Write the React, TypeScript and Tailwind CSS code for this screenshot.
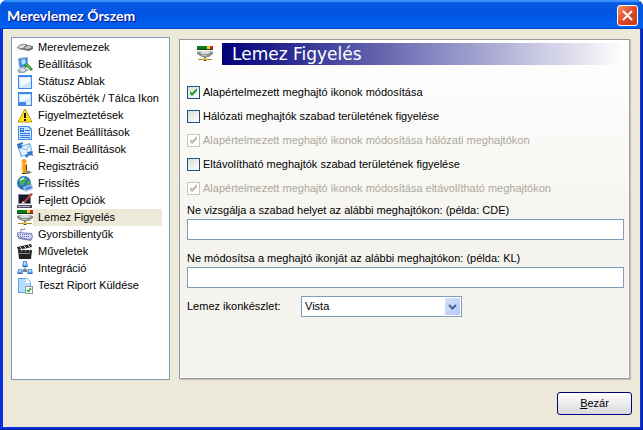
import type { ReactNode } from "react";

type MenuItem = { label: string; icon: ReactNode };

const LevelDrive = () => (
	<>
		<path d="M0 0h11v4H0z" fill="#0a7d1c" />
		<path d="M10 0h3v4h-3z" fill="#f2d21c" />
		<path d="M13 0h3v4h-3z" fill="#d8241c" />
		<path d="M0 3h16v1H0z" fill="#1c3a14" />
		<path d="M0 6l3-1h10l3 1v2l-4 3H5L0 8z" fill="#8d8d8b" />
		<path d="M2 6l3-1h6l3 1-3 2H5z" fill="#d9d9d7" />
		<path d="M5 9h5v1H5z" fill="#c4c4c2" />
		<path d="M7 11h2v2H7z" fill="#6d6d6b" />
		<path d="M1 13h14v1H1z" fill="#a98a2c" />
		<path d="M6 12h4v3H6z" fill="#e2b93a" />
		<path d="M7 14h2v1H7z" fill="#4a4a48" />
	</>
);

const items: MenuItem[] = [
	{
		label: "Merevlemezek",
		icon: (
			<>
				<path d="M0 7l4-3h6v3l-3 3H4L0 8z" fill="#8c8c8a" />
				<path d="M1 7l4-2h4L6 8H3z" fill="#e0e0de" />
				<path d="M6 8l4-3 6 1v3l-4 2-5-1z" fill="#6f6f6d" />
				<path d="M7 8l4-2 4 1-4 2z" fill="#c9c9c7" />
			</>
		),
	},
	{
		label: "Beállítások",
		icon: (
			<>
				<path d="M1 1l10-1v10l-9 1z" fill="#9ab4d0" />
				<path d="M2 2l8-1v8l-7 1z" fill="#2f86e8" />
				<path d="M4 3l4-1 1 4-4 2z" fill="#b9e2ff" />
				<path d="M0 13l6-3 6 3-5 3H2z" fill="#9aa4b8" />
				<path d="M2 13l4-2 3 2-3 2z" fill="#dfe5ee" />
				<path d="M7 8l3-2 6 6-2 2-4-4-2 1z" fill="#2e8b2e" />
				<path d="M9 7l5 5" stroke="#8fd46a" />
			</>
		),
	},
	{
		label: "Státusz Ablak",
		icon: (
			<>
				<path d="M1 1h14v14H1z" fill="#3f86e8" />
				<path d="M2 3h12v11H2z" fill="#cfe6ff" />
				<path d="M3 4h10v4l-10 5z" fill="#f4faff" />
			</>
		),
	},
	{
		label: "Küszöbérték / Tálca Ikon",
		icon: (
			<>
				<path d="M1 1h14v14H1z" fill="#3f86e8" />
				<path d="M2 3h12v8H2z" fill="#cfe6ff" />
				<path d="M3 4h10v3L3 11z" fill="#f4faff" />
				<path d="M9 11h5v3H9z" fill="#dcecff" />
			</>
		),
	},
	{
		label: "Figyelmeztetések",
		icon: (
			<>
				<path d="M8 1l7 13H1z" fill="#ffe61a" stroke="#b89c08" strokeLinejoin="round" />
				<path d="M7 5h2v5H7zM7 11h2v2H7z" fill="#111" />
			</>
		),
	},
	{
		label: "Üzenet Beállítások",
		icon: (
			<>
				<path d="M1 1h11l3 3v11H1z" fill="#3f8be6" />
				<path d="M2 2h9l3 3v9H2z" fill="#c8e3ff" />
				<path d="M3 3h4v4H3zM8 5h5v1H8zM3 8h10v1H3zM3 10h10v1H3zM3 12h10v1H3z" fill="#2f78d8" />
				<path d="M4 4h2v1H4z" fill="#e6f3ff" />
			</>
		),
	},
	{
		label: "E-mail Beállítások",
		icon: (
			<>
				<path d="M1 5l12-4 3 10-12 4z" fill="#5f9fe6" />
				<path d="M2 6l10-4 3 8-10 4z" fill="#e6f2ff" />
				<path d="M2 6l8 2 2-6" fill="none" stroke="#8fbcf0" />
				<path d="M0 2l6-2v2L4 3l2 2-5 2z" fill="#2f74cf" />
				<path d="M8 13l3-1-1-2 5-1 1 5-3-1-4 3z" fill="#2f74cf" />
			</>
		),
	},
	{
		label: "Regisztráció",
		icon: (
			<>
				<path d="M9 11l6 2-3 2H7z" fill="#858583" />
				<circle cx="7" cy="2.5" r="2.5" fill="#f4a31c" />
				<path d="M4 5h6v6H9v4H5v-4H4z" fill="#f09a12" />
				<path d="M4 5h2v10H5v-4H4z" fill="#ffd46a" />
				<path d="M9 6h1v5H9zM5 14h4v1H5z" fill="#5c3a0a" />
			</>
		),
	},
	{
		label: "Frissítés",
		icon: (
			<>
				<circle cx="7" cy="7" r="7" fill="#2c74c8" />
				<path d="M2 3l5-2 3 2-2 3-2 4-3-2zM10 6l3-2v4l-3 1z" fill="#4db04a" />
				<path d="M3 4l4-2" stroke="#d4ecff" strokeWidth="1.5" />
				<path d="M6 11l9-3 1 5-8 3z" fill="#a8bedc" />
				<path d="M8 12l6-2 1 2-6 2z" fill="#3f86e8" />
			</>
		),
	},
	{
		label: "Fejlett Opciók",
		icon: (
			<>
				<path d="M1 1h13v10H1z" fill="#8585a5" />
				<path d="M2 2h11v8H2z" fill="#16162e" />
				<path d="M0 12h15v3H0z" fill="#4a4a62" />
				<path d="M1 13h12v1H1z" fill="#b5b5c6" />
				<path d="M6 9l8-9 2 1-8 9z" fill="#b5432c" />
				<path d="M4 11l2-3 2 2z" fill="#f0e8d8" />
			</>
		),
	},
	{ label: "Lemez Figyelés", icon: <LevelDrive /> },
	{
		label: "Gyorsbillentyűk",
		icon: (
			<>
				<path d="M4 5V2l3 1 1-2" fill="none" stroke="#8888b0" />
				<path d="M0 6l2-1 13 1 1 4-2 4-12-2-2-3z" fill="#7d86bb" />
				<path d="M1 6l13 1 1 3-2 2-11-2z" fill="#d2d8f4" />
				<path d="M3 7.5h10M3 9.5h10" stroke="#6f7ab8" strokeDasharray="1 1" />
			</>
		),
	},
	{
		label: "Műveletek",
		icon: (
			<>
				<path d="M0 3l14-3 1 3L1 6z" fill="#2a2a2a" />
				<path d="M3 3l2 2M7 2l2 2M11 1l2 2" stroke="#ddd" />
				<path d="M1 6h14l-1 9H2z" fill="#222" />
				<path d="M2 9.5h11M5 6L4 8M9 6L8 8M13 6l-1 2" stroke="#8c8c8c" />
			</>
		),
	},
	{
		label: "Integráció",
		icon: (
			<>
				<path d="M8 6v4M3 11l5-2 5 2" fill="none" stroke="#8a8a8a" />
				<path d="M6 0h4l1 6H5zM1 8h4l1 5H0zM11 8h4l1 5h-6z" fill="#5b9fec" />
				<path d="M7 1h2v3H7zM2 9h2v2H2zM12 9h2v2h-2z" fill="#b4dcff" />
				<path d="M6 5h4v1H6zM1 12h4v1H1zM11 12h4v1h-4z" fill="#2f62b8" />
				<path d="M6 8h4v3H6z" fill="#7a7f8a" />
			</>
		),
	},
	{
		label: "Teszt Riport Küldése",
		icon: (
			<>
				<path d="M1 0h9l4 4v11H1z" fill="#58a5ea" />
				<path d="M2 1h8l3 3v10H2z" fill="#b8deff" />
				<path d="M9 0l5 5H9z" fill="#eef8ff" />
				<path d="M8 8h8v8H8z" fill="#8f9a9f" />
				<path d="M9 9h6v6H9z" fill="#fff" />
				<path d="M10 12l1.5 1.5L14 10" fill="none" stroke="#2fa52f" strokeWidth="1.5" />
			</>
		),
	},
];

const checks = [
	{ id: "default-icons", label: "Alapértelmezett meghajtó ikonok módosítása", checked: true, disabled: false },
	{ id: "network-space", label: "Hálózati meghajtók szabad területének figyelése", checked: false, disabled: false },
	{ id: "network-icons", label: "Alapértelmezett meghajtó ikonok módosítása hálózati meghajtókon", checked: true, disabled: true },
	{ id: "removable-space", label: "Eltávolítható meghajtók szabad területének figyelése", checked: false, disabled: false },
	{ id: "removable-icons", label: "Alapértelmezett meghajtó ikonok módosítása eltávolítható meghajtókon", checked: true, disabled: true },
];

const Icon = ({ children }: { children: ReactNode }) => (
	<svg viewBox="0 0 16 16" className="h-4 w-4 shrink-0" aria-hidden="true">
		{children}
	</svg>
);

const CheckRow = ({ id, label, checked, disabled }: (typeof checks)[number]) => (
	<div className="flex h-6 items-center gap-[3px]">
		<span className="relative flex shrink-0">
			<input
				id={id}
				type="checkbox"
				defaultChecked={checked}
				disabled={disabled}
				className="peer h-[13px] w-[13px] appearance-none border border-[#1d5281] bg-linear-to-br from-[#dcdcd7] to-white disabled:border-[#cac8bb] disabled:from-white"
			/>
			<svg
				viewBox="0 0 13 13"
				className="pointer-events-none absolute inset-0 hidden text-[#21a121] peer-checked:block peer-disabled:text-[#bcbaa9]"
				aria-hidden="true"
			>
				<path d="M3 5v3l2 2 5-5V2L5 7z" fill="currentColor" />
			</svg>
		</span>
		<label htmlFor={id} className={disabled ? "text-[#aca899]" : ""}>
			{label}
		</label>
	</div>
);

const TitleBar = () => (
	<header className="flex h-[29px] items-center justify-between bg-linear-to-b from-[#0a5be0] via-[#0054e3] to-[#0263f5] pt-px pr-[5px] pl-[7px] shadow-[inset_0_2px_1px_#3a93ff,inset_0_-1px_1px_#0042c4]">
		<h1 className="font-[Lato,sans-serif] text-[14px] font-bold text-white [text-shadow:1px_1px_1px_#0f1089]">
			Merevlemez Őrszem
		</h1>
		<button
			type="button"
			aria-label="Bezárás"
			className="flex h-[21px] w-[21px] items-center justify-center rounded-[3px] border border-white bg-linear-to-br from-[#f0906f] via-[#e0482a] to-[#c43a12]"
		>
			<svg viewBox="0 0 11 11" className="h-[11px] w-[11px]" aria-hidden="true">
				<path d="M1 1l9 9M10 1l-9 9" stroke="#fff" strokeWidth="2" />
			</svg>
		</button>
	</header>
);

const SideMenu = () => (
	<nav className="w-[159px] shrink-0 border border-[#7f9db9] bg-white py-px pr-[7px] pl-[5px]">
		<ul>
			{items.map(({ label, icon }) => (
				<li key={label} className="flex h-[17px] items-center">
					<Icon>{icon}</Icon>
					<button
						type="button"
						className={`h-full flex-1 pl-[5px] text-left whitespace-nowrap ${label === "Lemez Figyelés" ? "bg-[#ece9d8]" : ""}`}
					>
						{label}
					</button>
				</li>
			))}
		</ul>
	</nav>
);

const DriveWatch = () => (
	<section className="mt-[2px] mr-[2px] mb-px flex-1 border border-[#919b9c] bg-linear-to-b from-white to-[#f4f3ee] to-60% pt-[3px] pr-[5px] pl-[7px] shadow-[inset_-1px_-1px_0_#fff,1px_1px_1px_#c9c6b8]">
		<div className="flex items-center gap-[9px] pl-[10px]">
			<Icon>
				<LevelDrive />
			</Icon>
			<h2 className="h-[22px] flex-1 bg-linear-to-r/srgb from-[#00007b] to-white pl-[10px] font-['DejaVu_Sans',sans-serif] text-[17px] leading-[22px] text-white">
				Lemez Figyelés
			</h2>
		</div>

		<div className="mt-[15px]">
			{checks.map((check) => (
				<CheckRow key={check.id} {...check} />
			))}
		</div>

		<div className="mt-[2px] flex flex-col">
			<label htmlFor="skip-space" className="h-[17px] leading-4">
				Ne vizsgálja a szabad helyet az alábbi meghajtókon: (példa: CDE)
			</label>
			<input id="skip-space" type="text" className="h-[21px] border border-[#7f9db9] bg-white px-1" />
		</div>
		<div className="mt-[10px] flex flex-col">
			<label htmlFor="skip-icon" className="h-[17px] leading-4">
				Ne módosítsa a meghajtó ikonját az alábbi meghajtókon: (példa: KL)
			</label>
			<input id="skip-icon" type="text" className="h-[21px] border border-[#7f9db9] bg-white px-1" />
		</div>

		<div className="mt-2 flex items-center">
			<label htmlFor="icon-set" className="w-[114px]">
				Lemez ikonkészlet:
			</label>
			<span className="relative w-[161px]">
				<select
					id="icon-set"
					className="block h-[21px] w-full appearance-none border border-[#7f9db9] bg-white pl-[3px]"
				>
					<option>Vista</option>
				</select>
				<span className="pointer-events-none absolute top-[2px] right-[2px] flex h-[17px] w-[15px] items-center justify-center rounded-[1px] bg-linear-to-br from-[#d5e0fc] to-[#b4c8f6]">
					<svg viewBox="0 0 9 6" className="h-[6px] w-[9px]" aria-hidden="true">
						<path d="M1 1l3.5 3.5L8 1" fill="none" stroke="#4d6185" strokeWidth="2" />
					</svg>
				</span>
			</span>
		</div>
	</section>
);

export default function App() {
	return (
		<div className="bg-white">
			<div className="flex min-h-screen flex-col overflow-hidden rounded-t-[7px] bg-[#0831d9] font-['Liberation_Sans',Arial,sans-serif] text-[11px] text-black shadow-[inset_-1px_-1px_0_#001d9c]">
				<TitleBar />
				<main className="mx-[3px] mb-[3px] flex flex-1 flex-col bg-[#ece9d8] pt-2 pr-2 pb-3 pl-2">
					<div className="flex flex-1 gap-[9px]">
						<SideMenu />
						<DriveWatch />
					</div>
					<div className="mt-3 flex justify-end">
						<button
							type="button"
							className="h-[23px] w-[75px] rounded-[3px] border border-[#00007b] bg-linear-to-b from-white to-[#d8d8dc]"
						>
							<span className="underline">B</span>ezár
						</button>
					</div>
				</main>
			</div>
		</div>
	);
}
